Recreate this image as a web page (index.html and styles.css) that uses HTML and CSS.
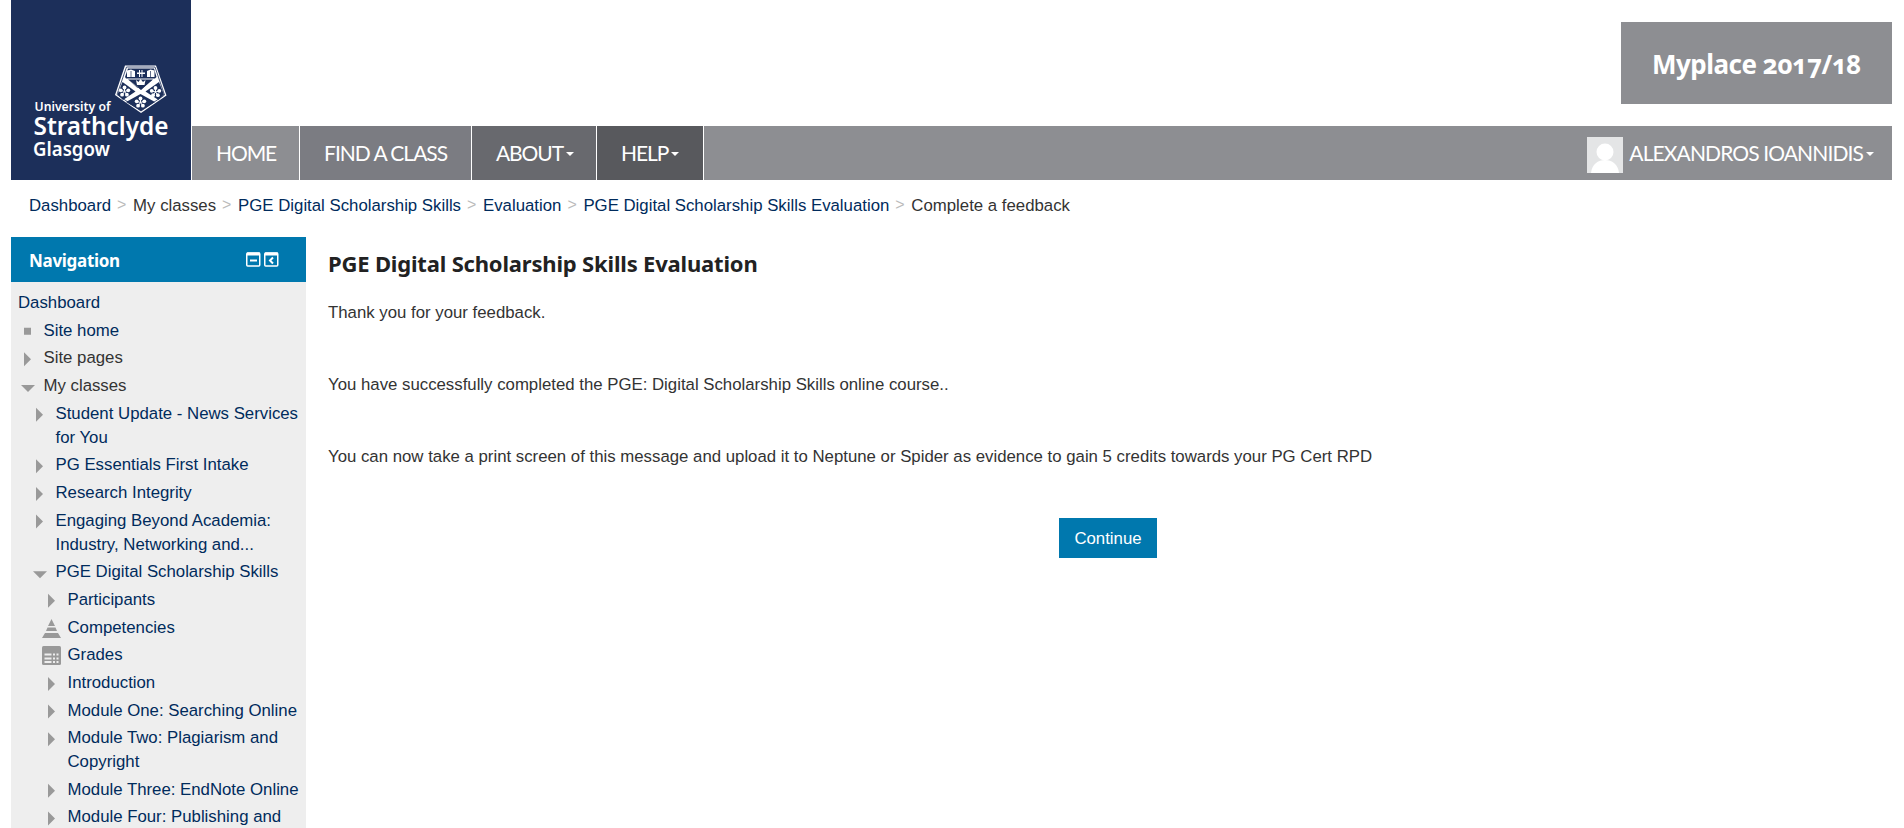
FILE: index.html
```html
<!DOCTYPE html>
<html lang="en">
<head>
<meta charset="utf-8">
<title>PGE Digital Scholarship Skills Evaluation</title>
<link rel="stylesheet" href="styles.css">
</head>
<body>
<header class="header">
  <svg class="logo" viewBox="0 0 180 180" width="180" height="180">
    <rect width="180" height="180" fill="#1c2f5a"/>
    <g class="logo-text" fill="#fff">
      <text x="23.500" y="110.500" font-size="13" textLength="76" lengthAdjust="spacingAndGlyphs">University of</text>
      <text x="22.500" y="135" font-size="25" textLength="135" lengthAdjust="spacingAndGlyphs">Strathclyde</text>
      <text x="22" y="155.500" font-size="20" textLength="77" lengthAdjust="spacingAndGlyphs">Glasgow</text>
    </g>
    <path d="M114 65.500H145L155.500 95.500L130 113L104 95Z" fill="#fff"/>
    <path d="M115.500 67H144L153.500 95L130 111L106 94.500Z" fill="none" stroke="#1c2f5a" stroke-width=".8"/>
    <g fill="#1c2f5a">
      <path d="M117 68.500H143L145.500 77L144 78.500H115L114 77Z"/>
      <path d="M118 80L126.500 88L134 80L141 80L130 90Z"/>
      <path d="M117 79.500H142L130 89.500Z"/>
      <path d="M111.500 82L124.500 91.500L112 100L106.500 94.500Z"/>
      <path d="M148 82L134.500 91.500L147.500 100L153 94.500Z"/>
      <path d="M129.500 94L144 102L130 111L115 102Z"/>
    </g>
    <g fill="#fff">
      <path d="M116 70.500L120 69.500L124 71V77H116ZM136 71L139.500 69.500L143.500 70.500V77H136Z"/>
      <path d="M126 72.500H134V74H126ZM128 70H129V77H128ZM130.500 70H131.500V77H130.500Z"/>
      <path d="M125 80L127.500 82L129.500 79L132 82L134.500 80L133.500 85H126Z"/>
    </g>
    <g stroke="#1c2f5a" stroke-width=".7"><path d="M120 71V77M139.500 71V77"/></g>
    <g fill="#fff">
      <g id="flower"><circle cx="113.500" cy="87.500" r="1.900"/><circle cx="117.300" cy="90.300" r="1.900"/><circle cx="115.900" cy="94.700" r="1.900"/><circle cx="111.100" cy="94.700" r="1.900"/><circle cx="109.700" cy="90.300" r="1.900"/><path d="M113.500 88V91.500L111 95M113.500 91.500L116 95M110 90.500L113.500 91.500L117 90.500" fill="none" stroke="#fff"/></g>
      <use href="#flower" x="31" y=".5"/>
      <use href="#flower" x="16" y="11"/>
    </g>
  </svg>
  <div class="header-main">
    <div class="site-title">Myplace 2017/18</div>
    <nav class="menu">
      <a class="menu-item home">HOME</a>
      <a class="menu-item find">FIND A CLASS</a>
      <a class="menu-item about">ABOUT<i class="caret"></i></a>
      <a class="menu-item help">HELP<i class="caret"></i></a>
      <a class="user">
        <svg width="36" height="36" viewBox="0 0 36 36"><rect width="36" height="36" fill="#e4e5e6"/><circle cx="18" cy="15" r="8.500" fill="#fff"/><path d="M4 36C5 27 11 23 18 23S31 27 32 36Z" fill="#fff"/></svg>
        <span class="user-name">ALEXANDROS IOANNIDIS</span><i class="caret"></i>
      </a>
    </nav>
  </div>
</header>
<div class="breadcrumb">
  <a>Dashboard</a><i>&gt;</i><span>My classes</span><i>&gt;</i><a>PGE Digital Scholarship Skills</a><i>&gt;</i><a>Evaluation</a><i>&gt;</i><a>PGE Digital Scholarship Skills Evaluation</a><i>&gt;</i><span>Complete a feedback</span>
</div>
<div class="columns">
  <aside class="block">
    <div class="block-head">
      <h2>Navigation</h2>
      <svg width="33" height="15" viewBox="0 0 33 15" fill="none" stroke="#fff">
        <rect x=".75" y="1" width="13" height="13" rx="1" stroke-width="1.500"/><path d="M1 2H14" stroke-width="3"/><path d="M4 8.500H11" stroke-width="2"/>
        <rect x="18.750" y="1" width="13" height="13" rx="1" stroke-width="1.500"/><path d="M19 2H32" stroke-width="3"/><path d="M27 5.500L24 8.500L27 11.500" stroke-width="2"/>
      </svg>
    </div>
    <ul class="tree">
      <li class="root"><a>Dashboard</a></li>
      <li class="l1"><b class="dot"></b><a>Site home</a></li>
      <li class="l1"><b class="closed"></b><span>Site pages</span></li>
      <li class="l1"><b class="open"></b><span>My classes</span></li>
      <li class="l2"><b class="closed"></b><a>Student Update - News Services<br>for You</a></li>
      <li class="l2"><b class="closed"></b><a>PG Essentials First Intake</a></li>
      <li class="l2"><b class="closed"></b><a>Research Integrity</a></li>
      <li class="l2"><b class="closed"></b><a>Engaging Beyond Academia:<br>Industry, Networking and...</a></li>
      <li class="l2"><b class="open"></b><a>PGE Digital Scholarship Skills</a></li>
      <li class="l3"><b class="closed"></b><a>Participants</a></li>
      <li class="l3"><svg class="icon" viewBox="0 0 19 19" fill="#999"><path d="M9.500 0L13 7H6ZM5.500 8.500H13.500L15 12H4ZM3 14H16L19 19H0Z"/></svg><a>Competencies</a></li>
      <li class="l3"><svg class="icon" viewBox="0 0 19 19"><rect width="19" height="19" rx="1.500" fill="#999"/><path d="M2.500 8.500H9.500M11 8.500H13M14.500 8.500H16.500M2.500 12.500H9.500M11 12.500H13M14.500 12.500H16.500M2.500 16H9.500M11 16H13M14.500 16H16.500" stroke="#eee" stroke-width="2"/></svg><a>Grades</a></li>
      <li class="l3"><b class="closed"></b><a>Introduction</a></li>
      <li class="l3"><b class="closed"></b><a>Module One: Searching Online</a></li>
      <li class="l3"><b class="closed"></b><a>Module Two: Plagiarism and<br>Copyright</a></li>
      <li class="l3"><b class="closed"></b><a>Module Three: EndNote Online</a></li>
      <li class="l3"><b class="closed"></b><a>Module Four: Publishing and</a></li>
    </ul>
  </aside>
  <main class="content">
    <h1>PGE Digital Scholarship Skills Evaluation</h1>
    <p>Thank you for your feedback.</p>
    <p>You have successfully completed the PGE: Digital Scholarship Skills online course..</p>
    <p>You can now take a print screen of this message and upload it to Neptune or Spider as evidence to gain 5 credits towards your PG Cert RPD</p>
    <button class="continue">Continue</button>
  </main>
</div>
</body>
</html>
```

FILE: styles.css
```css
* { box-sizing: border-box; }
body {
  margin: 0;
  height: 828px;
  overflow: hidden;
  padding: 0 12px 0 11px;
  background: #fff;
  color: #333;
  font: 16.8px/24px "Liberation Sans", Arial, sans-serif;
}
a { color: #002b5c; }
.header { display: flex; height: 180px; gap: 1px; }
.logo { flex: none; }
.logo-text { font-family: "Noto Sans", sans-serif; font-weight: 600; }
.header-main { flex: 1; display: flex; flex-direction: column; }
.site-title {
  align-self: flex-end;
  margin-top: 22px;
  width: 271px;
  height: 82px;
  background: #8d8e92;
  color: #fff;
  font: 700 26px/84px "Noto Sans", sans-serif;
  font-variant-numeric: oldstyle-nums;
  letter-spacing: -.5px;
  text-align: center;
  white-space: nowrap;
}
.menu {
  display: flex;
  margin-top: 22px;
  height: 54px;
  background: #8d8e92;
  font: 21px/54px Lato, sans-serif;
  white-space: nowrap;
}
.menu a { color: #fff; }
.menu-item { padding-left: 24px; border-right: 1px solid #fff; display: flex; align-items: center; letter-spacing: -1.1px; }
.home { width: 108px; }
.find { width: 172px; background: #7b7c82; letter-spacing: -1px; }
.about { width: 125px; background: #68696e; }
.help { width: 107px; background: #58595d; }
.caret { border: 4px solid transparent; border-top-color: #fff; border-bottom: 0; margin: 2px 0 0 3px; }
.user { display: flex; align-items: center; margin-left: auto; padding-right: 18px; }
.user svg { margin-top: 4px; }
.user-name { margin-left: 6px; letter-spacing: -.88px; }
.breadcrumb { display: flex; padding: 14px 0 0 18px; height: 57px; white-space: nowrap; }
.breadcrumb i { width: 22px; padding-left: 6px; font-style: normal; color: #bbb; font-size: 16px; line-height: 22px; }
.columns { display: flex; gap: 22px; }
.block { width: 295px; flex: none; }
.block-head {
  display: flex;
  align-items: center;
  justify-content: space-between;
  height: 45px;
  padding: 0 27px 0 18px;
  background: #0078ae;
  color: #fff;
}
.block-head h2 { margin: 3px 0 0; font: 700 17px/24px "Noto Sans", sans-serif; letter-spacing: -.3px; }
.tree { list-style: none; margin: 0; padding: 9px 0 0; height: 560px; background: #eee; line-height: 23.9px; white-space: nowrap; }
.tree li { display: flex; padding-bottom: 3.78px; }
.root { padding-left: 7px; }
.l1 { padding-left: 7px; }
.l2 { padding-left: 19px; }
.l3 { padding-left: 31px; }
.tree b, .icon { width: 19px; height: 19px; margin: 3px 6.500px 0 0; flex: none; background: #999; }
.tree .icon { background: none; }
.dot { clip-path: polygon(6px 6px, 13px 6px, 13px 13px, 6px 13px); }
.closed { clip-path: polygon(6px 3px, 13px 10px, 6px 17px); }
.open { clip-path: polygon(3px 8px, 17px 8px, 10px 15px); }
.content { flex: 1; display: flex; flex-direction: column; }
.content h1 { margin: 11px 0 23px; font: 700 22px/30px "Noto Sans", sans-serif; letter-spacing: -.18px; color: #222; white-space: nowrap; }
.content p { margin: 0 0 48px; height: 24px; white-space: nowrap; }
.continue {
  align-self: center;
  margin: 1px 4px 0 0;
  width: 98px;
  height: 40px;
  border: 0;
  padding: 1px 0 0;
  background: #0078ae;
  color: #fff;
  font: 16.8px "Liberation Sans", Arial, sans-serif;
}
```
